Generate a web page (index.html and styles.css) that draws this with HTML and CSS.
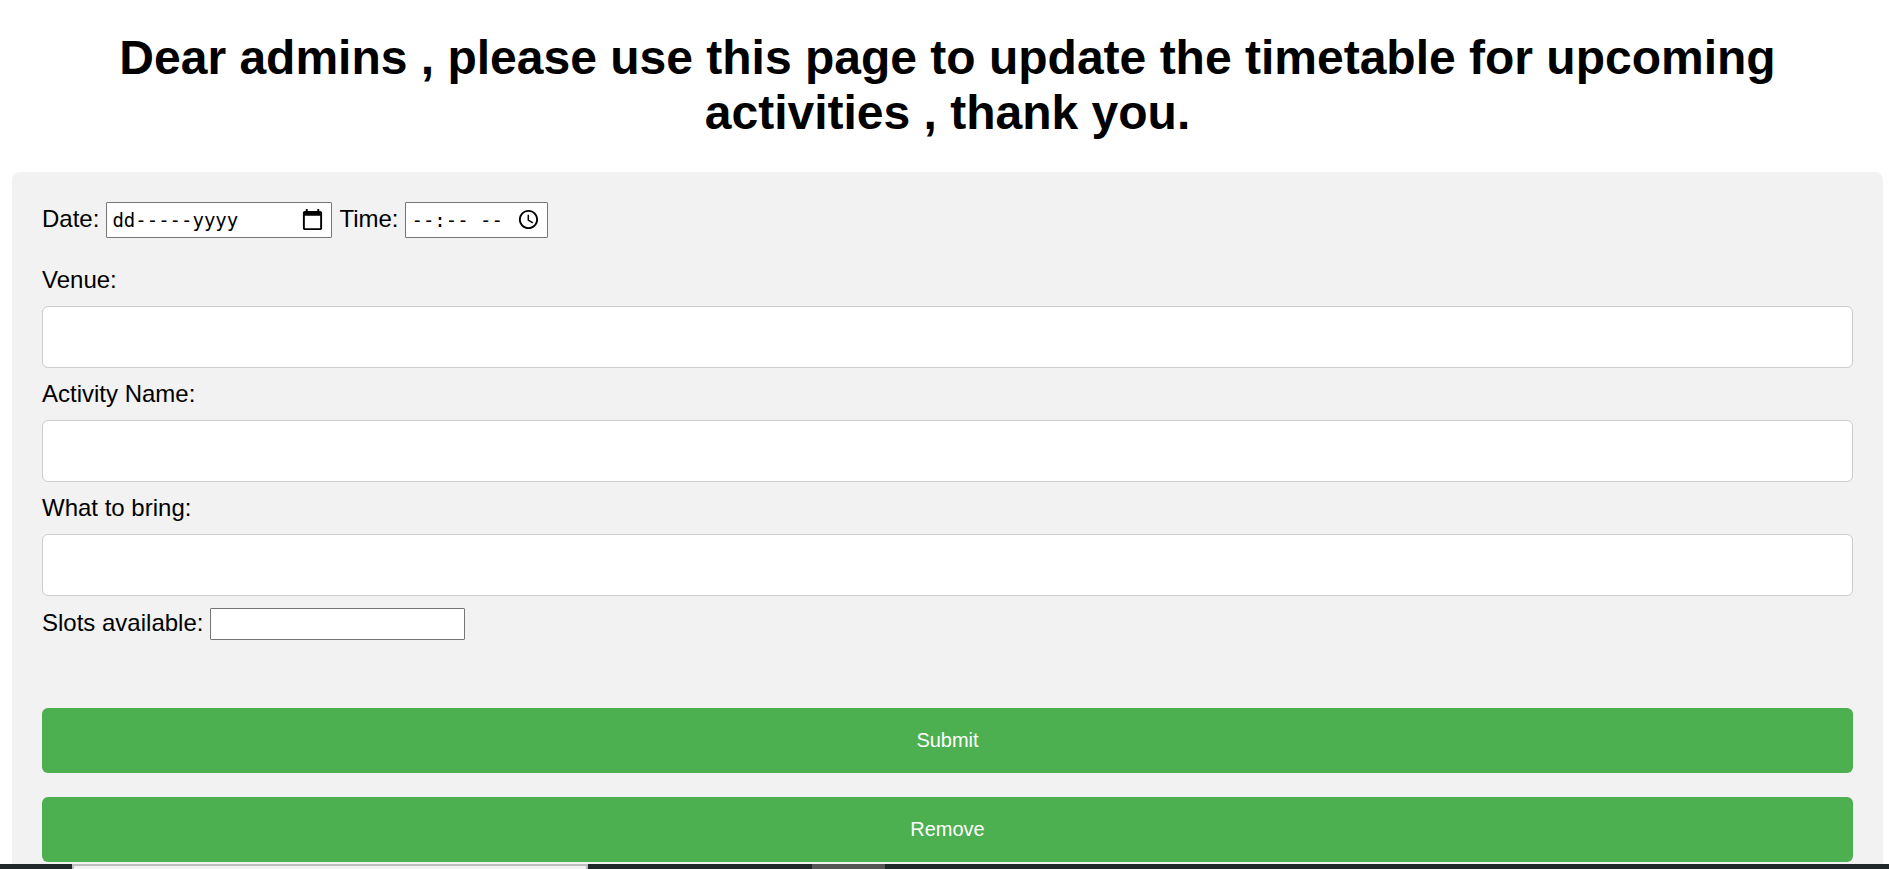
FILE: index.html
```html
<!DOCTYPE html>
<html lang="en">
<head>
<meta charset="utf-8">
<title>Update timetable</title>
<link rel="stylesheet" href="styles.css">
</head>
<body>
<main class="page">
  <h1 class="title">Dear admins , please use this page to update the timetable for upcoming activities , thank you.</h1>
  <form class="panel">
    <div class="row row-when">
      <label for="date">Date:</label>
      <span class="picker picker-date">
        <input id="date" type="text" value="dd-----yyyy">
        <svg class="picker-icon" viewBox="0 0 24 24" aria-hidden="true"><path d="M20 3h-1V1h-2v2H7V1H5v2H4c-1.100 0-2 .9-2 2v16c0 1.100.9 2 2 2h16c1.100 0 2-.9 2-2V5c0-1.100-.9-2-2-2zm0 18H4V8h16v13z"/></svg>
      </span>
      <label for="time">Time:</label>
      <span class="picker picker-time">
        <input id="time" type="text" value="--:-- --">
        <svg class="picker-icon" viewBox="0 0 24 24" aria-hidden="true"><path d="M12 2C6.500 2 2 6.500 2 12s4.500 10 10 10 10-4.500 10-10S17.500 2 12 2zm0 18c-4.400 0-8-3.600-8-8s3.600-8 8-8 8 3.600 8 8-3.600 8-8 8zm.5-13H11v6l5.200 3.200.8-1.300-4.500-2.700V7z"/></svg>
      </span>
    </div>
    <label class="field-label" for="venue">Venue:</label>
    <input class="field" id="venue" type="text">
    <label class="field-label" for="activity">Activity Name:</label>
    <input class="field" id="activity" type="text">
    <label class="field-label" for="bring">What to bring:</label>
    <input class="field" id="bring" type="text">
    <div class="row row-slots">
      <label for="slots">Slots available:</label>
      <input class="slots" id="slots" type="number">
    </div>
    <div class="actions">
      <button class="button" type="submit">Submit</button>
      <button class="button" type="button">Remove</button>
    </div>
  </form>
</main>
<div class="taskbar">
  <div class="taskbar-search"></div>
  <div class="taskbar-active"></div>
</div>
</body>
</html>
```
FILE: styles.css
```css
* {
  box-sizing: border-box;
}

body {
  margin: 0;
  height: 100vh;
  display: flex;
  flex-direction: column;
  overflow: hidden;
  background: #fff;
  color: #000;
  font: 24px/28px "Liberation Sans", Arial, sans-serif;
}

.page {
  flex: 1;
  min-height: 0;
  overflow: hidden;
  padding: 30px 6px 0 12px;
}

.title {
  margin: 0 0 32px;
  font-size: 48px;
  line-height: 55px;
  text-align: center;
}

.panel {
  padding: 30px;
  border-radius: 8px;
  background: #f2f2f2;
}

.row {
  display: flex;
  align-items: flex-start;
  gap: 7px;
}

.row-when {
  margin-bottom: 28px;
  line-height: 34px;
}

.row-slots {
  line-height: 30px;
}

.picker {
  position: relative;
  display: flex;
}

.picker input {
  width: 100%;
  height: 36px;
  padding: 2px 5px;
  border: 1px solid #767676;
  border-radius: 1px;
  background: #fff;
  font: 19px "DejaVu Sans Mono", monospace;
}

.picker-date {
  width: 226px;
}

.picker-time {
  width: 143px;
}

.picker-icon {
  position: absolute;
  top: 6px;
  right: 8px;
  width: 23px;
  height: 23px;
}

.field-label {
  display: block;
}

.field {
  display: block;
  width: 100%;
  height: 62px;
  margin: 12px 0;
  padding: 18px;
  border: 1px solid #ccc;
  border-radius: 6px;
  background: #fff;
  font: 20px "Liberation Sans", Arial, sans-serif;
}

.slots {
  width: 255px;
  height: 32px;
  padding: 2px 3px;
  border: 1px solid #767676;
  border-radius: 1px;
  background: #fff;
  font: 20px "Liberation Sans", Arial, sans-serif;
}

.actions {
  display: grid;
  gap: 24px;
  margin-top: 68px;
}

.button {
  padding: 21px 30px;
  border: 0;
  border-radius: 6px;
  background: #4caf50;
  color: #fff;
  font: 20px/23px "Liberation Sans", Arial, sans-serif;
}

.taskbar {
  display: flex;
  height: 5px;
  padding-left: 72px;
  background: #20282a;
}

.taskbar-search {
  width: 516px;
  margin-right: 224px;
  border: 2px solid #bebebe;
  border-bottom: 0;
  background: #f2f2f2;
}

.taskbar-active {
  width: 73px;
  background: #555;
}
```
